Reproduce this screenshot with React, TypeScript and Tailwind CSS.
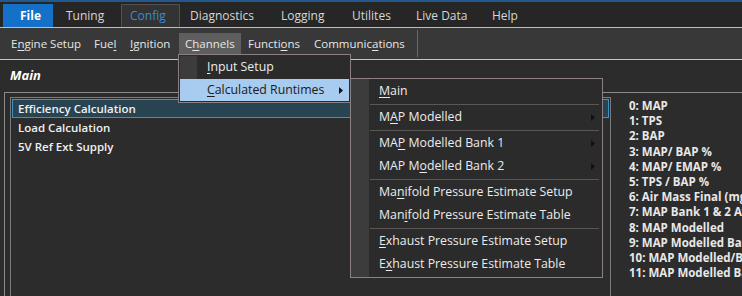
import type { ReactNode } from 'react';

const FONT = { fontFamily: '"Open Sans", "Noto Sans", Arial, sans-serif' };

// text with one underlined access-key letter
const Mn = ({ a, u, b }: { a: string; u: string; b: string }) => (
  <>
    {a}
    <span className="underline underline-offset-[2px] decoration-1">{u}</span>
    {b}
  </>
);

const Arrow = ({ color = '#111' }: { color?: string }) => (
  <svg width="4" height="7" viewBox="0 0 4 7" className="shrink-0">
    <path d="M0 0 L4 3.5 L0 7 Z" fill={color} />
  </svg>
);

const tabs = [
  { label: 'File', w: 'w-[50px]', pl: 'pl-[17px]', kind: 'file' },
  { label: 'Tuning', w: 'w-[68px]', pl: 'pl-[13px]', kind: '' },
  { label: 'Config', w: 'w-[59px]', pl: 'pl-[8px]', kind: 'active' },
  { label: 'Diagnostics', w: 'w-[101px]', pl: 'pl-[10px]', kind: '' },
  { label: 'Logging', w: 'w-[71px]', pl: 'pl-[0px]', kind: '' },
  { label: 'Utilites', w: 'w-[64px]', pl: 'pl-[0px]', kind: '' },
  { label: 'Live Data', w: 'w-[76px]', pl: 'pl-[0px]', kind: '' },
  { label: 'Help', w: 'w-[50px]', pl: 'pl-[0px]', kind: '' },
];

const channels = [
  'MAP',
  'TPS',
  'BAP',
  'MAP/ BAP %',
  'MAP/ EMAP %',
  'TPS / BAP %',
  'Air Mass Final (mg/stroke)',
  'MAP Bank 1 & 2 Average',
  'MAP Modelled',
  'MAP Modelled Bank 1',
  'MAP Modelled/BAP %',
  'MAP Modelled Bank 2',
];

const SubItem = ({ children, arrow }: { children: ReactNode; arrow?: boolean }) => (
  <div className="flex h-[23px] items-center pl-[28px] pr-[7px] text-[12.3px] text-[#ececec]">
    <span className="flex-1 whitespace-nowrap">{children}</span>
    {arrow && <Arrow />}
  </div>
);

const Sep = () => (
  <div className="flex h-[3px] items-center pl-[19px] pr-[3px]">
    <div className="h-px w-full bg-[#5c5656]" />
  </div>
);

export default function App() {
  return (
    <div className="relative h-[296px] w-[742px] overflow-hidden bg-[#2c2c2c]" style={FONT}>
      {/* top strip */}
      <div className="h-[2px] bg-[#24578a]" />

      {/* tabs */}
      <div className="flex h-[26px] items-end border-b border-[#bdbdbd] bg-[#262626] pl-[3px]">
        {tabs.map((t) => (
          <div
            key={t.label}
            className={`flex h-[23px] shrink-0 items-center whitespace-nowrap text-[12px] ${t.w} ${t.pl} ${
              t.kind === 'file'
                ? 'bg-[#1570c8] font-bold text-white'
                : t.kind === 'active'
                  ? 'border-x border-t border-[#505050] bg-[#333333] text-[#3a8ad9]'
                  : 'text-[#d6d6d6]'
            }`}
          >
            {t.label}
          </div>
        ))}
      </div>

      {/* ribbon */}
      <div className="flex h-[32px] items-center whitespace-nowrap border-b border-[#c4c4c4] bg-[#383838] pl-[11px] text-[11.5px] text-[#e6e6e6]">
        <span className="w-[83px] shrink-0"><Mn a="E" u="n" b="gine Setup" /></span>
        <span className="w-[36px] shrink-0"><Mn a="Fue" u="l" b="" /></span>
        <span className="w-[49px] shrink-0"><Mn a="" u="I" b="gnition" /></span>
        <span className="flex h-[22px] w-[62px] shrink-0 items-center bg-[#5e5e5e] pl-[6px]"><Mn a="C" u="h" b="annels" /></span>
        <span className="w-[73px] shrink-0 pl-[7px]"><Mn a="Functi" u="o" b="ns" /></span>
        <span className="w-[103px] shrink-0"><Mn a="Communic" u="a" b="tions" /></span>
        <span className="h-[27px] w-px shrink-0 bg-[#6a6a6a]" />
      </div>

      {/* page header */}
      <div className="flex h-[32px] items-center pl-[10px] text-[13px] font-bold italic text-white">Main</div>

      {/* panel */}
      <div className="ml-[4px] h-[210px] border-l border-t border-[#8a8a8a] pl-[5px] pt-[4px]">
        <div className="flex h-full">
          <div className="w-[601px] shrink-0 border border-[#7a7a7a] p-[1px] text-[11.5px] font-semibold text-[#f0f0f0]">
            <div className="flex h-[19px] items-center border border-[#3f93c4] bg-[#284352] pl-[5px]">Efficiency Calculation</div>
            <div className="flex h-[19px] items-center pl-[6px]">Load Calculation</div>
            <div className="flex h-[19px] items-center pl-[6px]">5V Ref Ext Supply</div>
          </div>
          <div className="shrink-0 whitespace-nowrap pl-[18px] pt-[1px] text-[11.5px] font-bold leading-[15.2px] text-[#e8e8e8]">
            {channels.map((c, i) => (
              <div key={i}>{`${i}: ${c}`}</div>
            ))}
          </div>
        </div>
      </div>

      {/* Channels dropdown */}
      <div className="absolute left-[178px] top-[54px] flex w-[173px] flex-col border border-[#8c8182] bg-[#2b2b2b] p-px">
        <div className="flex h-[23px] items-center">
          <div className="h-full w-[17px] bg-[#3c3c3c]" />
          <span className="pl-[10px] text-[12.3px] text-[#ececec]"><Mn a="" u="I" b="nput Setup" /></span>
        </div>
        <div className="flex h-[22px] items-center bg-[#a8cbf0] pl-[27px] pr-[6px] text-[12.3px] text-[#1a1a1a]">
          <span className="flex-1"><Mn a="" u="C" b="alculated Runtimes" /></span>
          <Arrow />
        </div>
      </div>

      {/* Calculated Runtimes submenu */}
      <div className="absolute left-[350px] top-[78px] w-[253px] border border-[#8c8182] bg-[#2b2b2b] py-px">
        <div className="absolute bottom-0 left-0 top-0 w-[18px] bg-[#3c3c3c]" />
        <div className="relative">
          <SubItem><Mn a="" u="M" b="ain" /></SubItem>
          <Sep />
          <SubItem arrow><Mn a="M" u="A" b="P Modelled" /></SubItem>
          <Sep />
          <SubItem arrow><Mn a="MA" u="P" b=" Modelled Bank 1" /></SubItem>
          <SubItem arrow><Mn a="MAP M" u="o" b="delled Bank 2" /></SubItem>
          <Sep />
          <SubItem><Mn a="Ma" u="n" b="ifold Pressure Estimate Setup" /></SubItem>
          <SubItem><Mn a="Man" u="i" b="fold Pressure Estimate Table" /></SubItem>
          <Sep />
          <SubItem><Mn a="" u="E" b="xhaust Pressure Estimate Setup" /></SubItem>
          <SubItem><Mn a="E" u="x" b="haust Pressure Estimate Table" /></SubItem>
        </div>
      </div>
    </div>
  );
}
